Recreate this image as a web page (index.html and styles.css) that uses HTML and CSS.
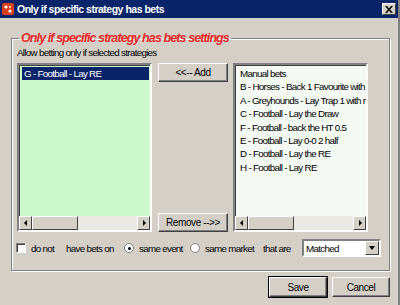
FILE: index.html
```html
<!DOCTYPE html>
<html lang="en">
<head>
  <meta charset="UTF-8">
  <title>Only if specific strategy has bets</title>
  <link rel="stylesheet" href="styles.css">
</head>
<body>
  <div class="window">
    <div class="titlebar">
      <span class="appicon">
        <svg width="12" height="12" viewBox="0 0 12 12">
          <rect x="0" y="0" width="12" height="12" rx="2" fill="#d8401c"/>
          <circle cx="4" cy="4" r="1.6" fill="#fff"/>
          <circle cx="8" cy="8" r="1.6" fill="#fff"/>
          <circle cx="8" cy="4" r="1.2" fill="#f6c0a0"/>
        </svg>
      </span>
      <span class="title">Only if specific strategy has bets</span>
      <span class="close">
        <svg width="8" height="7" viewBox="0 0 8 7">
          <path d="M0 0h2l2 2.5 2-2.5h2l-3 3.5 3 3.5h-2l-2-2.5-2 2.5h-2l3-3.5z" fill="#000"/>
        </svg>
      </span>
    </div>

    <div class="body">
      <fieldset class="group">
        <legend>Only if specific strategy has bets settings</legend>
        <p class="hint">Allow betting only if selected strategies</p>

        <div class="lists">
          <div class="listbox selected-list">
            <div class="items">
              <div class="item active">G - Football - Lay RE</div>
            </div>
            <div class="hscroll">
              <span class="arrow left"></span>
              <span class="thumb"></span>
              <span class="track"></span>
              <span class="arrow right"></span>
            </div>
          </div>

          <div class="middle">
            <button class="btn">&lt;&lt;-- Add</button>
            <button class="btn">Remove --&gt;&gt;</button>
          </div>

          <div class="listbox all-list">
            <div class="items">
              <div class="item">Manual bets</div>
              <div class="item">B - Horses - Back 1 Favourite with less than 5 runners</div>
              <div class="item">A - Greyhounds - Lay Trap 1 with record</div>
              <div class="item">C - Football - Lay the Draw</div>
              <div class="item">F - Football - back the HT 0.5</div>
              <div class="item">E - Football - Lay 0-0 2 half</div>
              <div class="item">D - Football - Lay the RE</div>
              <div class="item">H - Football - Lay RE</div>
            </div>
            <div class="hscroll">
              <span class="arrow left"></span>
              <span class="thumb"></span>
              <span class="track"></span>
              <span class="arrow right"></span>
            </div>
          </div>
        </div>

        <div class="options">
          <span class="check"></span>
          <span class="lbl w-donot">do not</span>
          <span class="lbl w-have">have bets on</span>
          <span class="radio on"></span>
          <span class="lbl w-event">same event</span>
          <span class="radio"></span>
          <span class="lbl w-market">same market</span>
          <span class="lbl w-that">that are</span>
          <div class="combo">
            <span class="value">Matched</span>
            <span class="drop"><span class="tri"></span></span>
          </div>
        </div>
      </fieldset>

      <div class="actions">
        <button class="btn big default">Save</button>
        <button class="btn big">Cancel</button>
      </div>
    </div>
  </div>
</body>
</html>
```

FILE: styles.css
```css
* {
  box-sizing: border-box;
}
body {
  margin: 0;
  width: 400px;
  height: 305px;
  overflow: hidden;
  font-family: "Liberation Sans", Arial, sans-serif;
  font-size: 9.8px;
  letter-spacing: -0.7px;
  color: #000;
  background: #d4d0c8;
}
.window {
  width: 400px;
  height: 305px;
  border-right: 2px solid #808080;
  display: flex;
  flex-direction: column;
}
.titlebar {
  height: 18px;
  background: #0a246a;
  color: #fff;
  display: flex;
  align-items: center;
  padding: 0 2px 0 2px;
  gap: 3px;
}
.appicon {
  display: flex;
}
.title {
  flex: 1;
  font-weight: bold;
  font-size: 10.5px;
  letter-spacing: -0.5px;
}
.close {
  width: 14px;
  height: 12px;
  background: #d4d0c8;
  border: 1px solid;
  border-color: #fff #404040 #404040 #fff;
  display: flex;
  align-items: center;
  justify-content: center;
}
.body {
  flex: 1;
  padding: 13px 8px 0 11px;
  display: flex;
  flex-direction: column;
}
.group {
  margin: 0;
  padding: 0 4px 0 5px;
  height: 240px;
  border: 1px solid #808080;
  box-shadow: inset 1px 1px 0 #fff, 1px 1px 0 #fff;
}
.group legend {
  padding: 0 2px;
  margin-left: 2px;
  color: #e8282a;
  font-weight: bold;
  font-style: italic;
  font-size: 12.5px;
  line-height: 14px;
  letter-spacing: -0.9px;
}
.hint {
  margin: 2px 0 0 0;
  line-height: 12px;
}
.lists {
  display: flex;
  margin-top: 4px;
}
.listbox {
  width: 135px;
  height: 169px;
  border: 2px solid;
  border-color: #808080 #fff #fff #808080;
  box-shadow: inset 1px 1px 0 #404040;
  display: flex;
  flex-direction: column;
  overflow: hidden;
}
.selected-list {
  background: #ccf8cc;
}
.all-list {
  background: #f4f9f4;
}
.items {
  flex: 1;
  padding: 2px 1px 0 3px;
  white-space: nowrap;
  overflow: hidden;
}
.item {
  height: 13.4px;
  line-height: 13px;
  padding-left: 2px;
}
.item.active {
  background: #0a246a;
  color: #fff;
}
.hscroll {
  height: 14px;
  display: flex;
  background: #ebe9e4;
}
.arrow {
  width: 13px;
  height: 14px;
  background: #d4d0c8;
  border: 1px solid;
  border-color: #fff #404040 #404040 #fff;
  position: relative;
}
.arrow::after {
  content: "";
  position: absolute;
  top: 3px;
  border: 3px solid transparent;
}
.arrow.left::after {
  left: 1px;
  border-right: 3px solid #000;
}
.arrow.right::after {
  left: 5px;
  border-left: 3px solid #000;
}
.thumb {
  width: 46px;
  height: 14px;
  background: #d4d0c8;
  border: 1px solid;
  border-color: #fff #404040 #404040 #fff;
}
.track {
  flex: 1;
}
.middle {
  width: 70px;
  margin: 0 5px 0 6px;
  display: flex;
  flex-direction: column;
  justify-content: space-between;
}
.btn {
  font-family: "Liberation Sans", Arial, sans-serif;
  font-size: 10px;
  letter-spacing: -0.4px;
  height: 19px;
  padding: 0;
  background: #d4d0c8;
  border: 1px solid;
  border-color: #fff #404040 #404040 #fff;
  box-shadow: inset -1px -1px 0 #808080;
  color: #000;
}
.options {
  display: flex;
  align-items: center;
  margin-top: 8px;
  height: 16px;
  white-space: nowrap;
}
.check {
  width: 10px;
  height: 10px;
  background: #fff;
  border: 1px solid;
  border-color: #808080 #fff #fff #808080;
  box-shadow: inset 1px 1px 0 #404040;
  margin-left: -1px;
  margin-right: 5px;
}
.lbl {
  display: inline-block;
}
.w-donot { width: 35px; }
.w-have { width: 58px; }
.w-event { width: 51px; }
.w-market { width: 58px; }
.w-that { width: 39px; }
.radio {
  width: 10px;
  height: 10px;
  border-radius: 50%;
  background: #fff;
  border: 1px solid #808080;
  margin-right: 5px;
  position: relative;
}
.radio.on::after {
  content: "";
  position: absolute;
  left: 2.5px;
  top: 2.5px;
  width: 3px;
  height: 3px;
  border-radius: 50%;
  background: #000;
}
.combo {
  width: 79px;
  height: 18px;
  background: #fff;
  border: 2px solid;
  border-color: #808080 #fff #fff #808080;
  display: flex;
  align-items: center;
}
.combo .value {
  flex: 1;
  padding-left: 2px;
}
.drop {
  width: 14px;
  height: 14px;
  background: #d4d0c8;
  border: 1px solid;
  border-color: #fff #404040 #404040 #fff;
  display: flex;
  align-items: center;
  justify-content: center;
}
.tri {
  border: 3px solid transparent;
  border-top: 4px solid #000;
  border-bottom: 0;
}
.actions {
  display: flex;
  justify-content: flex-end;
  gap: 5px;
  margin-top: 6px;
}
.btn.big {
  width: 58px;
  height: 20px;
}
.btn.default {
  outline: 1px solid #000;
}
```
